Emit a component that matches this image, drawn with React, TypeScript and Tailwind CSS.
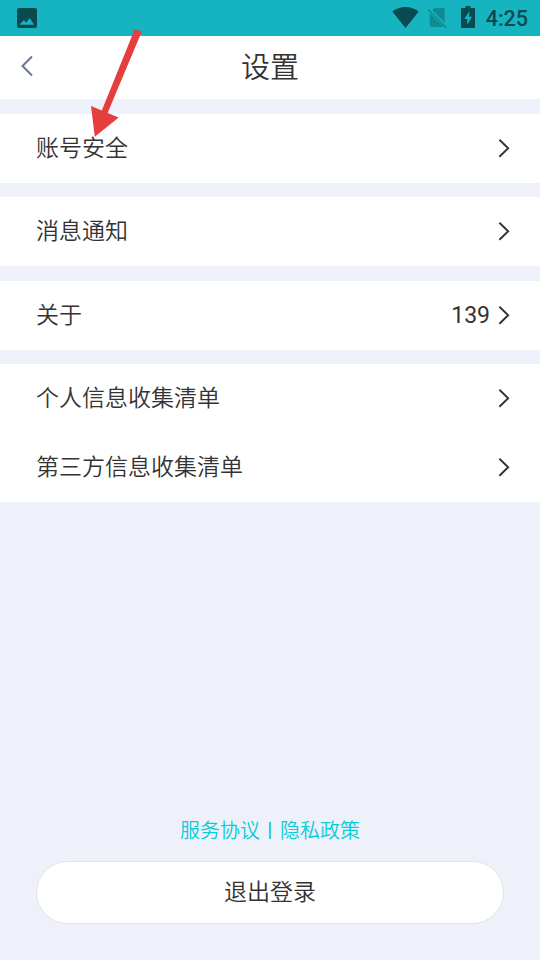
import type { ReactNode } from "react";

function StatusBar() {
  return (
    <div className="flex h-9 shrink-0 items-start bg-[#16b4c0] text-[#084a50]">
      <svg className="ml-[17px] mt-2 h-5 w-5" viewBox="0 0 20 20">
        <path
          fill="currentColor"
          fillRule="evenodd"
          d="M2 0H18Q20 0 20 2V18Q20 20 18 20H2Q0 20 0 18V2Q0 0 2 0ZM2.5 16.7H17.2L12.7 10.2L9.3 14.5L6.8 12.2Z"
        />
      </svg>
      <svg className="ml-auto mt-[7px] h-[21px] w-[27px]" viewBox="0 0 27 21">
        <path fill="currentColor" d="M0.3 4.5C8 -1.5 19 -1.5 26.7 4.5L13.5 21Z" />
      </svg>
      <svg className="ml-2 mt-[7px] h-[22px] w-[21px]" viewBox="0 0 21 22">
        <path
          fill="#0f8b93"
          d="M7.2 1H16Q17.7 1 17.7 2.7V15.8L5.2 3.2ZM2.7 6L16.5 20H4.5Q2.7 20 2.7 18.3Z"
        />
        <path d="M1 2.2L19.2 20.7" stroke="#0f8b93" strokeWidth="1.5" />
      </svg>
      <svg className="ml-[13px] mt-1.5 h-[22px] w-[14px]" viewBox="0 0 14 22">
        <path
          fill="currentColor"
          fillRule="evenodd"
          d="M4.5 0H9.5V2H14V22H0V2H4.5ZM8.5 5L3.2 13H6.2V19L11 10.7H8Z"
        />
      </svg>
      <span className="ml-[11px] mr-3 mt-[7px] font-[Roboto,sans-serif] text-[21.5px] leading-6 font-medium">
        4:25
      </span>
    </div>
  );
}

function Header() {
  return (
    <header className="relative flex h-[63px] shrink-0 items-center justify-center bg-white">
      <svg className="absolute left-5 top-[19px] h-[22px] w-[14px]" viewBox="0 0 14 22" fill="none">
        <path d="M12 1.5L2.5 11L12 20.5" stroke="#65778b" strokeWidth="2" />
      </svg>
      <h1 className="-mt-1.5 text-[29px] leading-[50px] font-[350]">设置</h1>
    </header>
  );
}

function Row({ label, value }: { label: string; value?: string }) {
  return (
    <div className="flex h-[69px] items-center pl-9 pr-[30px]">
      <span className="-mt-1.5 grow text-[23px] leading-[34px] font-[350]">{label}</span>
      {value && <span className="mr-2 font-[Roboto,sans-serif] text-[23px] leading-7">{value}</span>}
      <svg className="h-5 w-3" viewBox="0 0 12 20" fill="none">
        <path d="M1.4 0.7L10.2 9.2L1.4 17.7" stroke="#333" strokeWidth="1.9" />
      </svg>
    </div>
  );
}

function Group({ children, className }: { children: ReactNode; className: string }) {
  return <section className={`bg-white ${className}`}>{children}</section>;
}

function PointerArrow() {
  return (
    <svg className="pointer-events-none absolute left-[88px] top-[26px] h-28 w-14" viewBox="88 26 56 112">
      <path d="M134.8 29L141.7 31.8L107.6 112.9L118.7 117.4L94.8 136.8L91 106L101.8 110.5Z" fill="#e53e3e" />
    </svg>
  );
}

export default function App() {
  return (
    <div className="relative flex h-[960px] w-[540px] flex-col overflow-hidden bg-[#eef1fa] font-['Noto_Sans_CJK_SC',sans-serif] text-[#333]">
      <StatusBar />
      <Header />
      <Group className="mt-[15px]">
        <Row label="账号安全" />
      </Group>
      <Group className="mt-[14px]">
        <Row label="消息通知" />
      </Group>
      <Group className="mt-[15px]">
        <Row label="关于" value="139" />
      </Group>
      <Group className="mt-[14px]">
        <Row label="个人信息收集清单" />
        <Row label="第三方信息收集清单" />
      </Group>
      <footer className="mt-auto px-9 pb-9">
        <div className="mb-4 flex items-center justify-center text-xl leading-[30px] font-[350] text-[#0acbd8]">
          <span>服务协议</span>
          <span className="mx-[9px] h-[17px] w-0.5 bg-[#2fd0dc]" />
          <span>隐私政策</span>
        </div>
        <button className="block h-[63px] w-full rounded-full border border-[#e2e3e7] bg-white pb-1.5 text-[23px] leading-[34px] font-[350]">
          退出登录
        </button>
      </footer>
      <PointerArrow />
    </div>
  );
}
